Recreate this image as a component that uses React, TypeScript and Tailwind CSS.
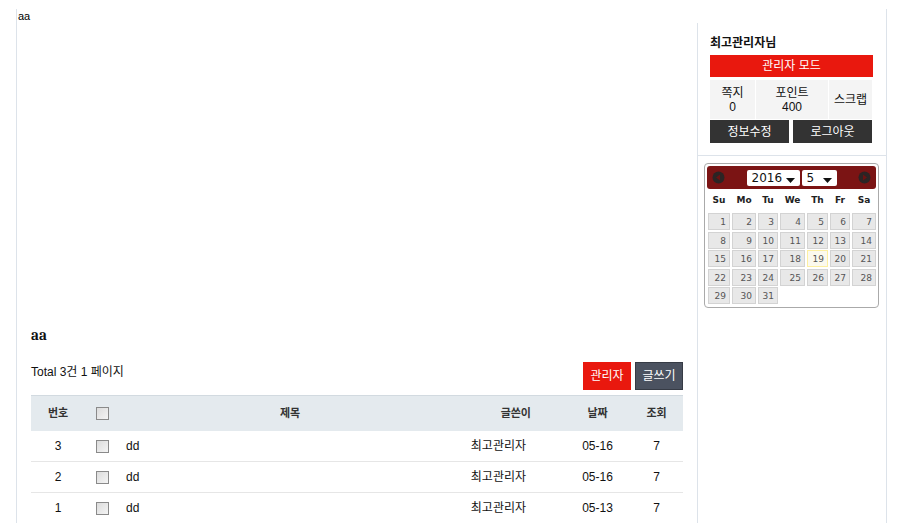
import React from 'react';

const posts = [
  { no: 3, title: 'dd', author: '최고관리자', date: '05-16', hit: 7 },
  { no: 2, title: 'dd', author: '최고관리자', date: '05-16', hit: 7 },
  { no: 1, title: 'dd', author: '최고관리자', date: '05-13', hit: 7 },
];

const weekDays = ['Su', 'Mo', 'Tu', 'We', 'Th', 'Fr', 'Sa'];

function CheckBox() {
  return (
    <span className="inline-block w-[13px] h-[13px] border border-[#8a8a8a] bg-gradient-to-br from-[#dcdcdc] to-[#f4f4f4]" />
  );
}

function NavIcon({ dir }: { dir: 'prev' | 'next' }) {
  return (
    <svg width="13" height="13" viewBox="0 0 13 13">
      <circle cx="6.5" cy="6.5" r="6" fill="#2c2424" />
      {dir === 'prev' ? (
        <path d="M4 6.5 L8 3.5 L8 9.5 Z" fill="#6a1212" />
      ) : (
        <path d="M9 6.5 L5 3.5 L5 9.5 Z" fill="#6a1212" />
      )}
    </svg>
  );
}

function FakeSelect({ value, width }: { value: string; width: string }) {
  return (
    <div className={`${width} h-[16px] bg-white flex items-center justify-between pl-[5px] pr-[5px] rounded-[2px]`}>
      <span className="text-[12px] leading-none text-[#111] font-['DejaVu_Sans',sans-serif]">{value}</span>
      <svg width="9" height="6" viewBox="0 0 9 6" className="mt-[6px]">
        <path d="M0 0 L9 0 L4.5 5 Z" fill="#111" />
      </svg>
    </div>
  );
}

function Calendar() {
  const cells: number[] = [];
  for (let d = 1; d <= 31; d++) cells.push(d);
  return (
    <div className="w-[175px] border border-[#aaaaaa] rounded-[4px] p-[2px] pb-[3px] bg-white">
      <div className="h-[23px] bg-[#7b1414] rounded-[3px] flex items-center justify-between px-[5px]">
        <NavIcon dir="prev" />
        <div className="flex gap-[2px]">
          <FakeSelect value="2016" width="w-[53px]" />
          <FakeSelect value="5" width="w-[35px]" />
        </div>
        <NavIcon dir="next" />
      </div>
      <div className="px-[1px] font-['DejaVu_Sans',sans-serif]">
        <div className="grid grid-cols-[22px_24px_20px_25px_21px_20px_24px] gap-x-[2px] h-[24px] items-center">
          {weekDays.map((w) => (
            <span key={w} className="text-center text-[9px] font-bold text-[#222]">{w}</span>
          ))}
        </div>
        <div className="grid grid-cols-[22px_24px_20px_25px_21px_20px_24px] gap-x-[2px] gap-y-[1.5px]">
          {cells.map((d) => (
            <span
              key={d}
              className={`h-[17px] text-right pr-[3px] text-[9px] leading-[16px] text-[#555] border ${
                d === 19 ? 'bg-[#fbf9ee] border-[#fcefa1]' : 'bg-[#e8e8e8] border-[#d3d3d3]'
              }`}
            >
              {d}
            </span>
          ))}
        </div>
      </div>
    </div>
  );
}

function Sidebar() {
  return (
    <aside className="w-[189px] border-l border-[#dde3ea]">
      {/* login box */}
      <div className="pl-[12px] pr-[13px] pt-[12px] pb-[12px] border-b border-[#dde3ea]">
        <div className="text-[12px] leading-[16px] font-bold text-[#111]">최고관리자님</div>
        <div className="mt-[4px] h-[22px] bg-[#e9180e] text-white text-[12px] flex items-center justify-center">
          관리자 모드
        </div>
        <div className="mt-[3px] grid grid-cols-[45px_72px_43px] gap-x-[1px] h-[39px] text-[12px] leading-[14px] text-[#111]">
          <div className="bg-[#f4f4f4] flex flex-col items-center justify-center">
            <span>쪽지</span>
            <span>0</span>
          </div>
          <div className="bg-[#f4f4f4] flex flex-col items-center justify-center">
            <span>포인트</span>
            <span>400</span>
          </div>
          <div className="bg-[#f4f4f4] flex items-center justify-center">스크랩</div>
        </div>
        <div className="mt-[1px] grid grid-cols-[79px_79px] gap-x-[4px]">
          <div className="h-[23px] bg-[#333333] text-white text-[12px] flex items-center justify-center">정보수정</div>
          <div className="h-[23px] bg-[#333333] text-white text-[12px] flex items-center justify-center">로그아웃</div>
        </div>
      </div>
      {/* calendar */}
      <div className="pt-[7px] pl-[6px] pb-[10px]">
        <Calendar />
      </div>
    </aside>
  );
}

function BoardList() {
  const cols = 'grid grid-cols-[54px_35px_340px_105px_65px_53px]';
  return (
    <div>
      <h2 className="font-serif font-bold text-[15px] leading-[20px] text-[#111]">aa</h2>
      <div className="mt-[17px] flex items-start justify-between">
        <span className="mt-[2px] text-[12px] leading-[16px] text-[#111]">Total 3건 1 페이지</span>
        <div className="flex gap-[4px]">
          <button className="w-[48px] h-[28px] bg-[#e9180e] text-white text-[12px]">관리자</button>
          <button className="w-[48px] h-[28px] bg-[#4b5260] border border-[#363b45] text-white text-[12px]">글쓰기</button>
        </div>
      </div>
      <div className="mt-[5px] text-[12px] text-[#111]">
        <div className={`${cols} h-[36px] items-center bg-[#e4eaee] border-t border-[#d2dae0] font-bold text-[11px] text-[#333]`}>
          <span className="text-center">번호</span>
          <span className="flex justify-center"><CheckBox /></span>
          <span className="text-center">제목</span>
          <span className="text-right pr-[34px]">글쓴이</span>
          <span className="text-center">날짜</span>
          <span className="text-center">조회</span>
        </div>
        {posts.map((p) => (
          <div key={p.no} className={`${cols} h-[31px] items-center border-b border-[#e6e6e6]`}>
            <span className="text-center">{p.no}</span>
            <span className="flex justify-center"><CheckBox /></span>
            <span className="pl-[6px]">{p.title}</span>
            <span className="text-right pr-[39px]">{p.author}</span>
            <span className="text-center">{p.date}</span>
            <span className="text-center">{p.hit}</span>
          </div>
        ))}
      </div>
    </div>
  );
}

export default function App() {
  return (
    <div className="h-[523px] overflow-hidden bg-white pt-[9px] font-['Liberation_Sans','Noto_Sans_CJK_KR',sans-serif] text-[#111]">
      <div className="ml-[16px] w-[871px] border-x border-[#dde3ea] min-h-[514px]">
        <div className="pl-[1px] text-[11px] leading-[14px] text-[#000]">aa</div>
        <div className="flex">
          <main className="w-[680px] px-[14px]">
            {/* empty visual area */}
            <div className="h-[302px]" />
            <BoardList />
          </main>
          <Sidebar />
        </div>
      </div>
    </div>
  );
}
